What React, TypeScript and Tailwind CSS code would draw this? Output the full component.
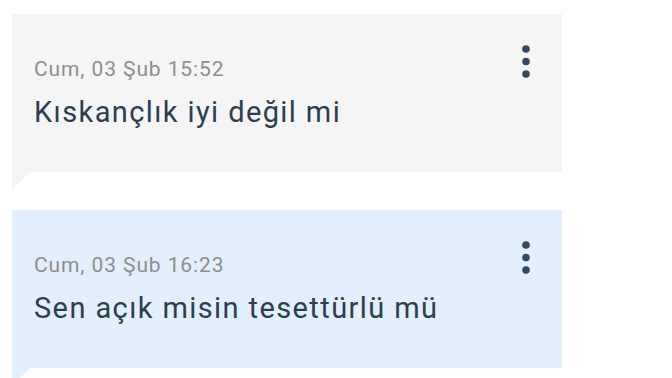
import { useState } from 'react'

type Message = {
  id: number
  time: string
  text: string
  bg: string
  tail: string
}

const messages: Message[] = [
  { id: 1, time: 'Cum, 03 Şub 15:52', text: 'Kıskançlık iyi değil mi', bg: 'bg-[#f5f5f5]', tail: 'border-t-[#f5f5f5]' },
  { id: 2, time: 'Cum, 03 Şub 16:23', text: 'Sen açık misin tesettürlü mü', bg: 'bg-[#e3effc]', tail: 'border-t-[#e3effc]' },
]

function MoreIcon() {
  return (
    <svg width="8" height="34" viewBox="0 0 8 34" className="fill-[#34495e]">
      <circle cx="4" cy="4" r="3.8" />
      <circle cx="4" cy="16.5" r="3.8" />
      <circle cx="4" cy="29" r="3.8" />
    </svg>
  )
}

function Bubble({ msg }: { msg: Message }) {
  const [open, setOpen] = useState(false)
  return (
    <div className="w-[550px]">
      <div className={`${msg.bg} h-[158px] flex justify-between`}>
        <div className="pl-[22px] pt-[43px]">
          <div className="text-[21px] leading-[24px] tracking-[0.9px] text-[#8e8e8e]">{msg.time}</div>
          <div className="mt-[15px] text-[29px] leading-[32px] tracking-[1.4px] text-[#2c3e50]">{msg.text}</div>
        </div>
        <button
          onClick={() => setOpen(!open)}
          className="self-start mt-[31px] mr-[32px] cursor-pointer"
          aria-label="Seçenekler"
        >
          <MoreIcon />
        </button>
      </div>
      {/* speech tail */}
      <div className={`w-0 h-0 border-t-[18px] border-r-[18px] ${msg.tail} border-r-transparent`} />
    </div>
  )
}

export default function App() {
  return (
    <div className="w-[672px] h-[378px] overflow-hidden bg-white pl-3 pt-[14px] font-['Roboto',sans-serif]">
      <div className="flex flex-col gap-[20px]">
        {messages.map((m) => (
          <Bubble key={m.id} msg={m} />
        ))}
      </div>
    </div>
  )
}
